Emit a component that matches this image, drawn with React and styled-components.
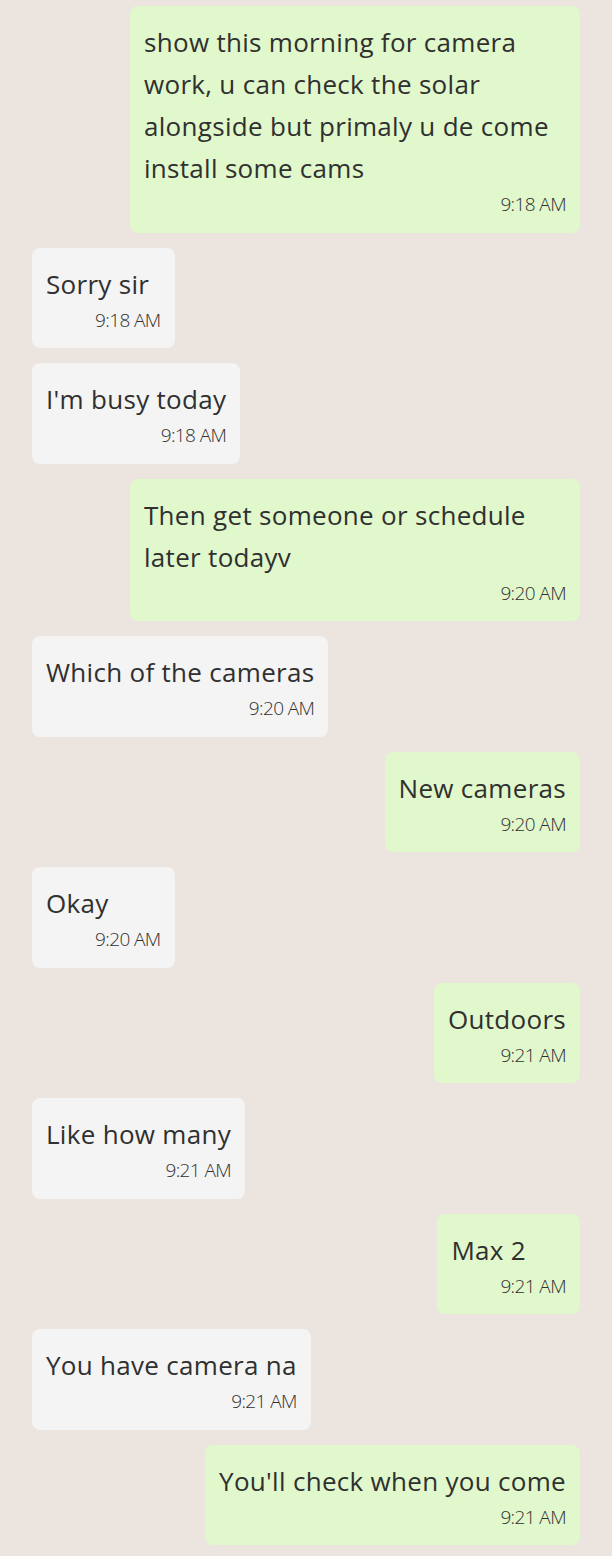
import styled, { createGlobalStyle } from "styled-components"

const GlobalStyle = createGlobalStyle`
  html, body {
    margin: 0;
    padding: 0;
    background: #ebe4df;
  }
  body {
    font-family: "Open Sans", "Noto Sans", sans-serif;
    color: #2f302f;
  }
`

const messages = [
  { id: 1, out: true, text: "show this morning for camera work, u can check the solar alongside but primaly u de come install some cams", time: "9:18 AM" },
  { id: 2, out: false, text: "Sorry sir", time: "9:18 AM" },
  { id: 3, out: false, text: "I'm busy today", time: "9:18 AM" },
  { id: 4, out: true, text: "Then get someone or schedule later todayv", time: "9:20 AM" },
  { id: 5, out: false, text: "Which of the cameras", time: "9:20 AM" },
  { id: 6, out: true, text: "New cameras", time: "9:20 AM" },
  { id: 7, out: false, text: "Okay", time: "9:20 AM" },
  { id: 8, out: true, text: "Outdoors", time: "9:21 AM" },
  { id: 9, out: false, text: "Like how many", time: "9:21 AM" },
  { id: 10, out: true, text: "Max 2", time: "9:21 AM" },
  { id: 11, out: false, text: "You have camera na", time: "9:21 AM" },
  { id: 12, out: true, text: "You'll check when you come", time: "9:21 AM" },
]

const Chat = styled.div`
  display: flex;
  flex-direction: column;
  gap: 15px;
  padding: 6px 32px 11px;
`

const Row = styled.div`
  display: flex;
  justify-content: ${p => (p.$out ? "flex-end" : "flex-start")};
`

const Bubble = styled.div`
  display: flex;
  flex-direction: column;
  max-width: 450px;
  box-sizing: border-box;
  padding: 15px 14px 13.5px;
  border-radius: 8px;
  background: ${p => (p.$out ? "#e1f7cc" : "#f4f4f4")};
`

const Text = styled.div`
  font-size: 26px;
  line-height: 42px;
  letter-spacing: 0.3px;
`

const Time = styled.div`
  align-self: flex-end;
  margin-left: 49px;
  font-size: 19px;
  font-weight: 300;
  line-height: 30px;
  letter-spacing: -0.6px;
  color: #303030;
`

export default function App() {
  return (
    <>
      <GlobalStyle />
      <Chat>
        {messages.map(m =>
          <Row key={m.id} $out={m.out}>
            <Bubble $out={m.out}>
              <Text>{m.text}</Text>
              <Time>{m.time}</Time>
            </Bubble>
          </Row>
        )}
      </Chat>
    </>
  )
}
